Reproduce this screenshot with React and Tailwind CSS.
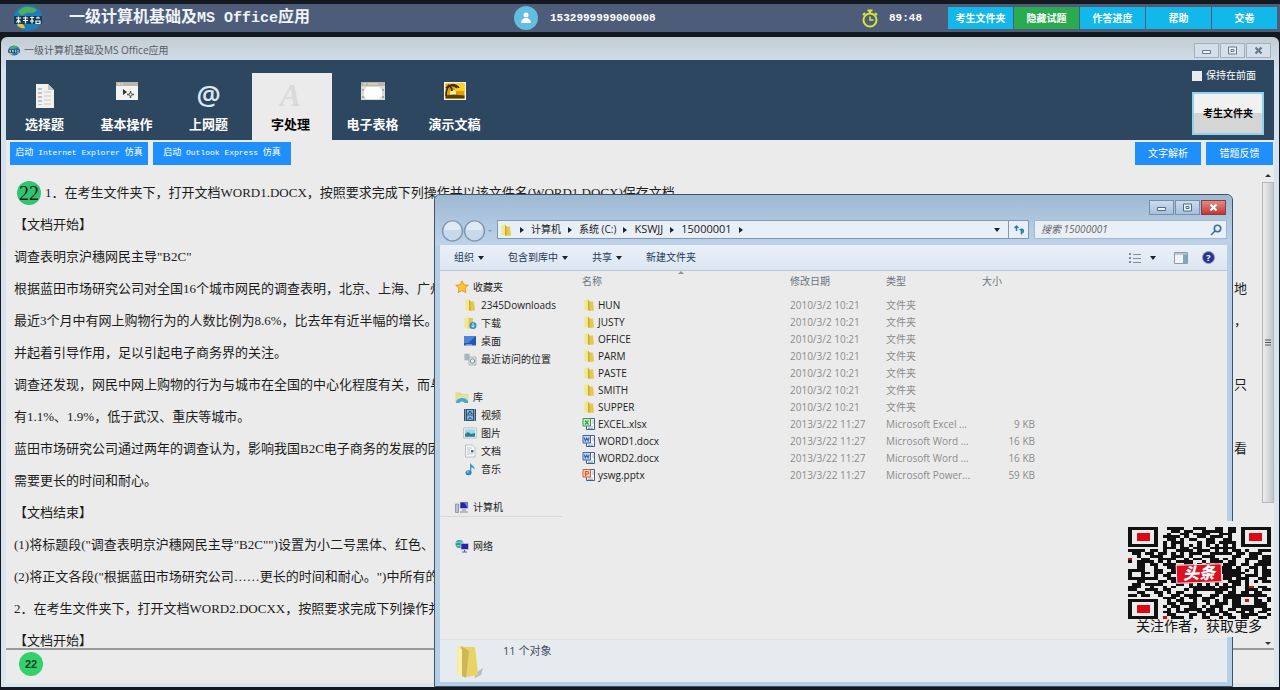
import React, { useState } from "react";

const navTabs = [
  { key: "choice", label: "选择题" },
  { key: "basic", label: "基本操作" },
  { key: "net", label: "上网题" },
  { key: "word", label: "字处理" },
  { key: "excel", label: "电子表格" },
  { key: "ppt", label: "演示文稿" },
];

const examActions = ["考生文件夹", "隐藏试题", "作答进度", "帮助", "交卷"];

// [start of the line, end of the line]
const questionLines = [
  ["【文档开始】"],
  ['调查表明京沪穗网民主导"B2C"'],
  ["根据蓝田市场研究公司对全国16个城市网民的调查表明，北京、上海、广州", "地"],
  ["最近3个月中有网上购物行为的人数比例为8.6%，比去年有近半幅的增长。人", "，"],
  ["并起着引导作用，足以引起电子商务界的关注。"],
  ["调查还发现，网民中网上购物的行为与城市在全国的中心化程度有关，而与", "只"],
  ["有1.1%、1.9%，低于武汉、重庆等城市。"],
  ["蓝田市场研究公司通过两年的调查认为，影响我国B2C电子商务的发展的因", "看"],
  ["需要更长的时间和耐心。"],
  ["【文档结束】"],
  ['(1)将标题段("调查表明京沪穗网民主导"B2C"")设置为小二号黑体、红色、居'],
  ['(2)将正文各段("根据蓝田市场研究公司……更长的时间和耐心。")中所有的"'],
  ["2．在考生文件夹下，打开文档WORD2.DOCXX，按照要求完成下列操作并"],
  ["【文档开始】"],
];

const sideGroups = [
  [
    { icon: "star", label: "收藏夹", root: true },
    { icon: "folder", label: "2345Downloads" },
    { icon: "download", label: "下载" },
    { icon: "desktop", label: "桌面" },
    { icon: "recent", label: "最近访问的位置" },
  ],
  [
    { icon: "library", label: "库", root: true },
    { icon: "video", label: "视频" },
    { icon: "image", label: "图片" },
    { icon: "doc", label: "文档" },
    { icon: "music", label: "音乐" },
  ],
  [{ icon: "computer", label: "计算机", root: true }],
  [{ icon: "network", label: "网络", root: true }],
];

const folder = (name) => ({ name, icon: "folder", date: "2010/3/2 10:21", type: "文件夹", size: "" });

const files = [
  folder("HUN"),
  folder("JUSTY"),
  folder("OFFICE"),
  folder("PARM"),
  folder("PASTE"),
  folder("SMITH"),
  folder("SUPPER"),
  { name: "EXCEL.xlsx", icon: "xls", date: "2013/3/22 11:27", type: "Microsoft Excel ...", size: "9 KB" },
  { name: "WORD1.docx", icon: "word", date: "2013/3/22 11:27", type: "Microsoft Word ...", size: "16 KB" },
  { name: "WORD2.docx", icon: "word", date: "2013/3/22 11:27", type: "Microsoft Word ...", size: "16 KB" },
  { name: "yswg.pptx", icon: "ppt", date: "2013/3/22 11:27", type: "Microsoft Power...", size: "59 KB" },
];

const qrRows = [
  "#######..####..###..##.##.#######",
  "#.....#...##.##..#####.##.#.....#",
  "#.###.#..#..##.####..###..#.###.#",
  "#.###.#.####.#..##.###.#..#.###.#",
  "#.###.#..##.#.##..##..##..#.###.#",
  "#.....#.#.###...#.##.####.#.....#",
  "#######.#.#.#.#.#.#.#.#.#.#######",
  "........###.##.##..######........",
  "####.##.#..####.###.#.#.##.#..###",
  ".##.##.##.#.#.###..#####.##.###..",
  "..#..###..###.#..###....##..##.##",
  "...##..####..#.##..##.#.#..###.##",
  "#.####.#.#.####..#.###.##..#..###",
  "..##.##.###..##.#.#.#.###.##.####",
  "..##..#..###.#.......###.#..##.#.",
  "####..##..##.........#####.#.#.##",
  "#..##.##.##..........######..#.##",
  "#..#..#.##.#..........####.###.##",
  "#######..##.........#.##.###..##.",
  "..##...##.###.......#..###.#.#.##",
  ".##.####...##.#.#.#.#.#.##.#.....",
  "###..#..#.#...######.####..#..##.",
  "##..###.##...#.########.#..###.##",
  "..##..##.#.##..#....##.##.##.##..",
  "##.##..#..##.####..##.#######.##.",
  "........###.#.##.###..###...##..#",
  "#######..#.##..#.##.#.#.#.#.###.#",
  "#.....#..##.####..#.###.#...####.",
  "#.###.#.#.##..##.#.###..#####.##.",
  "#.###.#..#.#.####.##.#.##.###..##",
  "#.###.#.##.###..####.##..##.#.##.",
  "#.....#..##...##.#.##.##..####..#",
  "#######...###.#..##..#.##.##..##.",
];

function TabIcon({ name, active }) {
  if (name === "choice") {
    return (
      <svg viewBox="0 0 20 26" className="h-[26px] w-5">
        <path d="M1 1h12l6 6v18H1z" fill="#f1f1ee" />
        <path d="M13 1v6h6z" fill="#bfc6ca" />
        <path d="M4 5v17M6 5v17" stroke="#8c9499" strokeDasharray="2 2" />
        <path d="M9 9h7M9 13h7M9 17h7M9 21h7" stroke="#c9c9c4" />
      </svg>
    );
  }
  if (name === "basic") {
    return (
      <svg viewBox="0 0 24 20" className="h-5 w-6">
        <path d="M1 1h22v18H1z" fill="#f3f3f1" />
        <path d="M1 1h22v4H1z" fill="#b9b8ac" />
        <path d="M3 3h6" stroke="#f6ecc0" strokeDasharray="2 1" />
        <path d="M8 8v6l4-3z" fill="#333" />
        <path d="M15.500 10v7M12 13.500h7" stroke="#555" strokeWidth="1.500" />
        <circle cx="15.500" cy="13.500" r="1.500" fill="#fff" stroke="#555" />
      </svg>
    );
  }
  if (name === "net") {
    return <span className="font-['Open_Sans',sans-serif] text-[27px] leading-6 font-semibold text-[#dbe9f3]">@</span>;
  }
  if (name === "word") {
    return (
      <span className={`font-['Liberation_Serif',serif] text-[32px] leading-7 font-bold italic ${active ? "text-[#d9dbdb]" : "text-[#dbe9f3]"}`}>A</span>
    );
  }
  if (name === "excel") {
    return (
      <svg viewBox="0 0 26 20" className="h-5 w-[26px]">
        <path d="M1 1h24v18H1z" fill="#dcdcd6" />
        <path d="M1 1h24v4H1z" fill="#b5b6b0" />
        <path d="M3 3h3M8 3h10" stroke="#f3e7a8" />
        <path d="M7 6h12l3 3v6l-3 3H7l-3-3V9z" fill="#fff" />
        <path d="M3 8v2M3 15v2M23 8v2M23 15v2" stroke="#777" />
      </svg>
    );
  }
  return (
    <svg viewBox="0 0 24 20" className="h-5 w-6">
      <path d="M1 1h22v18H1z" fill="#f8f4e4" />
      <path d="M2.500 2.500h19v15h-19z" fill="#e0a000" />
      <path d="M12 3h9.500v7H12z" fill="#ffd21e" />
      <circle cx="10" cy="12" r="3" fill="#fff3a8" />
      <path d="M2.500 17.500v-3l8-1 11 1v3z" fill="#5a3d05" />
      <path d="M3 15C3 8 5 5 8 4M3 7c3-3 8-4 11 0M8 4c4-1 7 1 8 3M5 4c2 1 4 3 4 6" fill="none" stroke="#3c2a04" strokeWidth="1.600" />
    </svg>
  );
}

function FileIcon({ name, className = "h-[14px] w-[14px]" }) {
  const office = { xls: ["#3f9a45", "X"], word: ["#3a63b0", "W"], ppt: ["#e0572c", "P"] };
  if (office[name]) {
    const [color, kind] = office[name];
    return (
      <svg viewBox="0 0 14 14" className={className}>
        <path d="M4.500 1.500h8v11h-8z" fill="#fff" stroke="#3c5f94" />
        <path d="M6 10h5M6 11.500h5M10 4h2M10 6h2" stroke="#8aa0c0" strokeWidth=".8" />
        <rect x=".5" y="1" width="8.500" height="8.500" rx="1" fill={color} />
        <rect x="1.500" y="2" width="6.500" height="6.500" fill="#fff" opacity=".75" />
        {kind === "X" && <path d="M3 3.500l3.500 4M6.500 3.500l-3.500 4" stroke={color} strokeWidth="1.200" />}
        {kind === "W" && <path d="M2.300 3.500l1 3.500 1.400-3 1.400 3 1-3.500" fill="none" stroke={color} strokeWidth="1.100" />}
        {kind === "P" && <path d="M3.500 8V3.500h1.800a1.300 1.300 0 010 2.700H3.500" fill="none" stroke={color} strokeWidth="1.200" />}
      </svg>
    );
  }
  return (
    <svg viewBox="0 0 14 14" className={className}>
      {name === "folder" && (
        <>
          <path d="M2.500 2l4-1v11.500l-4-.5z" fill="#f4e68a" />
          <path d="M6.500 3.500h4.500l1 9-5.500.5z" fill="#e3c94f" />
          <path d="M6 1.500l1.500 2V13L6 12z" fill="#c9a93a" />
        </>
      )}
      {name === "download" && (
        <>
          <path d="M1.500 2l4-1v12l-4-1z" fill="#f4e68a" />
          <path d="M5.500 2h4.500v10.500H5.500z" fill="#ddc65a" />
          <circle cx="10" cy="9.500" r="3.500" fill="#2f8fc4" />
          <path d="M10 7v4M8.300 9.500L10 11.300l1.700-1.800" fill="none" stroke="#d9f3ff" />
        </>
      )}
      {name === "desktop" && (
        <>
          <path d="M1 2h12v9.500H1z" fill="#2458b5" />
          <path d="M1 2h12L5 9H1z" fill="#4f83d6" />
          <path d="M3 11h6" stroke="#bcd3f2" />
        </>
      )}
      {name === "recent" && (
        <>
          <path d="M1 1.500h6v7H1z" fill="#c3cdd1" />
          <path d="M2 3h4M2 5h4M2 7h4" stroke="#889398" strokeWidth=".8" />
          <path d="M6 5h7v8H6z" fill="#d7dedf" stroke="#8f9ea3" strokeWidth=".6" />
          <circle cx="9.500" cy="9" r="2.200" fill="#eef5f5" stroke="#7c9494" />
        </>
      )}
      {name === "star" && (
        <path d="M7 .8l1.900 4 4.300.5-3.200 3 .9 4.400L7 10.500l-3.900 2.200.9-4.400-3.200-3 4.300-.5z" fill="#ffc62e" stroke="#e08a17" strokeWidth=".8" />
      )}
      {name === "library" && (
        <>
          <path d="M.5 2.500h5l1 1.500h7v8H.5z" fill="#eed978" />
          <path d="M2 5h11v6H2z" fill="#cfe6b8" />
          <path d="M1 12c1-5 10-5 12-1v2H9.500c-1-2-4-2-5 0H1z" fill="#4fa6cd" />
        </>
      )}
      {name === "video" && (
        <>
          <path d="M1 1h12v12H1z" fill="#33506e" />
          <path d="M4 2h6v4.500H4zM4 7.500h6V12H4z" fill="#7fb4dd" />
          <path d="M2.500 1.500v11M11.500 1.500v11" stroke="#d5dde4" strokeDasharray="1 1" />
          <path d="M5 6l2-3 2 3M5 11.500l2-2 2 2" fill="none" stroke="#17395c" />
        </>
      )}
      {name === "image" && (
        <>
          <path d="M.7 2h12.600v10H.7z" fill="#f8fafb" stroke="#9ba9b0" strokeWidth=".7" />
          <path d="M2 3.300h10v7.400H2z" fill="#9fd8ea" />
          <path d="M2 8l3-2 3 2 4-1v3.700H2z" fill="#2b7f93" />
        </>
      )}
      {name === "doc" && (
        <>
          <path d="M2.500 1h7L12 3.500V13H2.500z" fill="#fafbfc" stroke="#a2abb5" strokeWidth=".7" />
          <path d="M4 4h5M4 6h3M4 8h3M4 10h6" stroke="#a9b3c2" strokeWidth=".8" />
          <path d="M8 6h2.500v2.500H8z" fill="#4d6ba8" />
        </>
      )}
      {name === "music" && (
        <>
          <path d="M7 .5c1 3 5 3 4.500 7.500C11 6 9 5.500 8.300 5.500V11H7z" fill="#3b9ad2" />
          <ellipse cx="5.500" cy="10.800" rx="3" ry="2.500" fill="#2b86c5" />
          <ellipse cx="4.800" cy="10" rx="1.200" ry=".8" fill="#9fdcf5" />
        </>
      )}
      {name === "computer" && (
        <>
          <path d="M4.500 1.500h9v7.500h-9z" fill="#d7dcec" />
          <path d="M5.300 2.300h7.400v5.900H5.300z" fill="#2521a0" />
          <path d="M9 2.300h3.700v5.900z" fill="#6a7ee0" />
          <path d="M.5 4h3v8.500h-3z" fill="#b9c0d1" stroke="#6d7690" strokeWidth=".6" />
          <path d="M7 10h4M5 12h8" stroke="#7e8799" />
        </>
      )}
      {name === "network" && (
        <>
          <circle cx="4.500" cy="5" r="4" fill="#2d9a93" />
          <path d="M1 4c3-2 5 0 7-1M1.500 7c2-1 4 0 5 1" fill="none" stroke="#a8e4d8" />
          <path d="M6 4.500h7.500v6H6z" fill="#2822a6" stroke="#c4c9e6" strokeWidth=".7" />
          <path d="M9.500 11v2M7 13h5" stroke="#5b6488" />
        </>
      )}
    </svg>
  );
}

function Logo({ className }) {
  return (
    <span className={`relative flex items-center justify-center ${className}`}>
      <svg viewBox="0 0 30 26" className="h-full w-full">
        <ellipse cx="15" cy="13" rx="14.500" ry="12.800" fill="#1d7db8" />
        <path d="M5 7c4-6 12-7 19-2-3 5-8 1-12 4-3 2-5 1-7-2z" fill="#4fae5b" />
        <path d="M4 20c3-4 7-1 8 3-3 1-6-1-8-3z" fill="#e8c52e" />
        <path d="M1 11h28v8H1z" fill="#173b57" />
        <path d="M3 13h5M5.500 11.500v7M3.500 17.500l2-3 2 3M10 13h5M10 15.500h5M12.500 11.500v7M17 12.500h4M19 11.500v7M17 16h4M23 13h4M25 11.500v2M23 16h4v2.500h-4z" fill="none" stroke="#fff" strokeWidth="1.200" />
      </svg>
    </span>
  );
}

function WindowButtons({ explorer }) {
  const base = "flex h-[15px] w-[25px] items-center justify-center border";
  const plain = explorer
    ? "border-[#7590ad] bg-linear-to-b from-[#cbdcec] to-[#a6c0da] text-[#506a86]"
    : "border-[#a2afbd] bg-[#d3dfeb] text-[#66788b]";
  const close = explorer ? "border-[#8c3c44] bg-linear-to-b from-[#dc8b88] to-[#c23535] text-white" : plain;
  return (
    <div className="flex gap-px">
      <button aria-label="最小化" className={`${base} ${plain}`}>
        <svg viewBox="0 0 11 9" className="h-[9px] w-[11px]"><path d="M1.500 4.500h8v3h-8z" fill="#eef3f8" stroke="currentColor" /></svg>
      </button>
      <button aria-label="最大化" className={`${base} ${plain}`}>
        <svg viewBox="0 0 11 9" className="h-[9px] w-[11px]"><path d="M1.500 1h8v7h-8zM4 3.500h3v2H4z" fill="#eef3f8" stroke="currentColor" /></svg>
      </button>
      <button aria-label="关闭" className={`${base} ${close}`}>
        <svg viewBox="0 0 11 9" className="h-[9px] w-[11px]"><path d="M2.500 1.500l6 6M8.500 1.500l-6 6" stroke="currentColor" strokeWidth="2.200" /></svg>
      </button>
    </div>
  );
}

function ExamBar() {
  return (
    <header className="flex h-[37px] shrink-0 flex-col border-t-4 border-b-[5px] border-[#14181f] bg-[#4d5c78]">
      <div className="flex h-7 items-center pl-3">
        <Logo className="h-[26px] w-8" />
        <h1 className="w-[470px] pl-[25px] font-['Liberation_Mono','Noto_Sans_CJK_SC',monospace] text-[16px] leading-6 font-bold text-[#f0f3f8]">
          一级计算机基础及<span className="text-[15px]">MS Office</span>应用
        </h1>
        <svg viewBox="0 0 24 24" className="h-6 w-6">
          <circle cx="12" cy="12" r="12" fill="#62bde0" />
          <circle cx="12" cy="9" r="2.500" fill="#fff" />
          <path d="M7 17c.3-3.500 2.500-5 5-5s4.700 1.500 5 5z" fill="#fff" />
        </svg>
        <span className="pl-3 font-['Liberation_Mono',monospace] text-[11px] font-bold text-white">1532999999000008</span>
        <div className="ml-auto flex items-center">
          <svg viewBox="0 0 18 19" className="h-[19px] w-[18px]" fill="none" stroke="#d6e63c">
            <circle cx="9" cy="11" r="6.500" strokeWidth="2" />
            <path d="M6.500 1.500h5M9 1.500v3M14 4l2 2M4 4L2 6" strokeWidth="2" />
            <path d="M9 7.500V11h3.500" strokeWidth="1.500" />
          </svg>
          <span className="w-[69px] pl-[10px] font-['Liberation_Mono',monospace] text-[11px] font-bold text-white">89:48</span>
          <div className="flex gap-px pr-[3px]">
            {examActions.map((label, i) => (
              <button
                key={label}
                className={`h-[22px] w-[65px] text-[10px] font-bold text-white ${i === 1 ? "bg-[#2bab50]" : "bg-[#13b8ea]"}`}
              >
                {label}
              </button>
            ))}
          </div>
        </div>
      </div>
    </header>
  );
}

function Explorer() {
  return (
    <section className="absolute top-[194px] right-[47px] bottom-[3px] left-[434px] flex flex-col rounded-t-md border border-[#3d5468] bg-[#b5cfe6] px-[5px] pb-1 font-['Open_Sans','Noto_Sans_CJK_SC',sans-serif] text-[10px] text-[#222]">
      <div className="-mx-[5px] flex flex-col rounded-t-md bg-linear-to-b from-[#9fb9d3] to-[#bcd3ea] px-[5px]">
        <div className="flex h-[25px] items-center justify-end pr-px">
          <WindowButtons explorer />
        </div>
        <div className="flex h-[25px] items-start">
          <div className="flex w-[57px] items-center">
            <svg viewBox="0 0 54 22" className="h-[22px] w-[54px]">
              <circle cx="12.500" cy="11" r="10" fill="#c7d9ea" stroke="#8199b2" strokeWidth="1.500" />
              <circle cx="34.500" cy="11" r="10" fill="#c7d9ea" stroke="#8199b2" strokeWidth="1.500" />
              <path d="M4 10a8.500 8.500 0 0117 0zM26 10a8.500 8.500 0 0117 0z" fill="#dfeaf4" />
              <path d="M48 10h4l-2 2z" fill="#7c98b3" />
            </svg>
          </div>
          <div className="flex h-[19px] flex-1 items-center border border-[#8098b0] bg-[#e9eff6] pl-px">
            <FileIcon name="folder" className="h-[14px] w-[14px]" />
            {["计算机", "系统 (C:)", "KSWJJ", "15000001"].map((part) => (
              <span key={part} className="flex items-center">
                <Caret right />
                <span className={/^[A-Z0-9]+$/.test(part) ? "text-[11px]" : ""}>{part}</span>
              </span>
            ))}
            <Caret right />
            <span className="ml-auto pr-1"><Caret /></span>
            <button aria-label="刷新" className="flex h-full w-5 items-center justify-center border-l border-[#8098b0]">
              <svg viewBox="0 0 12 12" className="h-3 w-3" fill="none" stroke="#2c7fa8" strokeWidth="1.500">
                <path d="M3.500 7V2M1.500 4l2-2 2 2M8.500 5v5.500M6.500 6c3-2 5 0 3 3" />
              </svg>
            </button>
          </div>
          <div className="ml-[5px] flex h-[19px] w-[193px] items-center border border-[#a5b9cd] bg-[#e9eff6] px-1">
            <input aria-label="搜索" placeholder="搜索 15000001" className="min-w-0 flex-1 bg-transparent pl-[2px] italic outline-none placeholder:text-[#666]" />
            <svg viewBox="0 0 12 12" className="h-3 w-3" fill="none" stroke="#3f6da0" strokeWidth="1.600">
              <circle cx="7.500" cy="4.500" r="3.200" />
              <path d="M5 7l-4 4" />
            </svg>
          </div>
        </div>
      </div>
      <div className="flex h-[26px] shrink-0 items-center border-b border-[#b9c8da] bg-linear-to-b from-[#eaf0f8] to-[#dce6f2] pl-[14px] text-[#1e395b]">
        <button className="flex items-center">组织<Caret /></button>
        <button className="ml-5 flex items-center">包含到库中<Caret /></button>
        <button className="ml-5 flex items-center">共享<Caret /></button>
        <button className="ml-5">新建文件夹</button>
        <div className="ml-auto flex items-center pr-3">
          <button aria-label="更改视图" className="flex items-center gap-1">
            <svg viewBox="0 0 14 12" className="h-3 w-[14px]" stroke="#7d8b9b">
              <path d="M1 2h2M1 6h2M1 10h2" strokeWidth="2" />
              <path d="M5 2.500h8M5 6.500h8M5 10.500h8" />
            </svg>
            <Caret />
          </button>
          <button aria-label="预览窗格" className="ml-[14px]">
            <svg viewBox="0 0 14 12" className="h-3 w-[14px]">
              <path d="M.5.500h13v11H.5z" fill="#f0f4f8" stroke="#8a9bad" />
              <path d="M.5 2h13" stroke="#8a9bad" />
              <path d="M9 2.500h4v9H9z" fill="#7ba9b9" />
            </svg>
          </button>
          <button aria-label="获取帮助" className="ml-[14px] flex h-[13px] w-[13px] items-center justify-center rounded-full border border-[#8e98c8] bg-[#2a358f] text-[9px] leading-none font-bold text-white">
            ?
          </button>
        </div>
      </div>
      <div className="flex min-h-0 flex-1 bg-[#ebebeb]">
        <nav className="flex w-[142px] shrink-0 flex-col gap-5 pt-[7px]">
          {sideGroups.map((group, i) => (
            <ul key={i} className={i === 2 ? "mr-5 border-b border-[#d6d9dc]" : ""}>
              {group.map((item) => (
                <li key={item.label} className={item.root ? "pl-[15px]" : "pl-[23px]"}>
                  <a href="#" className="flex h-[18px] items-center gap-1 whitespace-nowrap">
                    <FileIcon name={item.icon} />
                    {item.label}
                  </a>
                </li>
              ))}
            </ul>
          ))}
        </nav>
        <div className="min-w-0 flex-1">
          <svg viewBox="0 0 6 3" className="ml-24 h-[3px] w-[6px]"><path d="M0 3h6L3 0z" fill="#8a96a3" /></svg>
          <table className="table-fixed border-collapse text-left text-[#8b8b8b]">
            <thead>
              <tr className="h-[22px] align-top text-[#6a7480]">
                <th className="w-[208px] p-0 font-normal">名称</th>
                <th className="w-24 p-0 font-normal">修改日期</th>
                <th className="w-24 p-0 font-normal">类型</th>
                <th className="w-[53px] p-0 font-normal">大小</th>
              </tr>
            </thead>
            <tbody>
              {files.map((f) => (
                <tr key={f.name} className="h-[17px] leading-4">
                  <td className="p-0 text-[#222]">
                    <span className="flex items-center gap-[2px]">
                      <FileIcon name={f.icon} />
                      {f.name}
                    </span>
                  </td>
                  <td className="p-0">{f.date}</td>
                  <td className="p-0 whitespace-nowrap">{f.type}</td>
                  <td className="p-0 text-right">{f.size}</td>
                </tr>
              ))}
            </tbody>
          </table>
        </div>
      </div>
      <footer className="flex h-[43px] shrink-0 gap-[13px] border-t border-[#dde2e8] bg-[#e6ebf0] pt-1 pl-2">
        <svg viewBox="0 0 42 36" className="h-9 w-[42px]">
          <path d="M26 30l9-6-2 7-6 3z" fill="#b9bec4" />
          <path d="M9 3l8-1v29l-8-1z" fill="#f3e48c" />
          <path d="M16 3h11l3 28-12 2z" fill="#e9d365" />
          <path d="M13 2l8 5-3 27-4-2z" fill="#cdb55a" />
          <path d="M9 3l5 2v28l-4-2z" fill="#f8efa9" />
        </svg>
        <span className="text-[11px] leading-[14px] text-[#3f4d5c]">11 个对象</span>
      </footer>
    </section>
  );
}

function Caret({ right }) {
  return (
    <svg viewBox="0 0 6 6" className={right ? "mx-[6px] h-[6px] w-[6px]" : "mx-1 h-[6px] w-[6px]"}>
      <path d={right ? "M1 0l4 3-4 3z" : "M0 1h6L3 5z"} fill="#1a2430" />
    </svg>
  );
}

function QrCard() {
  return (
    <aside className="absolute right-[7px] bottom-[53px] flex w-[148px] flex-col items-center bg-[#ebebeb] pt-[6px] pb-[2px]">
      <div className="relative">
        <svg viewBox="0 0 33 33" preserveAspectRatio="none" className="h-[92px] w-[143px]" shapeRendering="crispEdges">
          {qrRows.map((row, y) =>
            [...row].map((c, x) => c === "#" && <rect key={`${x}-${y}`} x={x} y={y} width="1" height="1" fill="#111" />)
          )}
          <path d="M25 24h5v5h-5zM29 23h1v3h-1z" fill="#111" />
          <path d="M26 25h3v3h-3z" fill="#ebebeb" />
          <path d="M2 2h3v3H2zM28 2h3v3h-3zM2 28h3v3H2zM27 26h1v1h-1zM0 11h1v1H0zM28 21h1v1h-1zM8 32h1v1H8z" fill="#dc0812" />
        </svg>
        <span className="absolute inset-0 m-auto flex h-[19px] w-[46px] -rotate-2 items-center justify-center border border-[#ebebeb] bg-[#dc1020] text-[16px] leading-none font-black text-white italic">
          头条
        </span>
      </div>
      <p className="font-['Liberation_Serif','Noto_Sans_CJK_SC',serif] text-[14px] leading-4 whitespace-nowrap text-[#111]">关注作者，获取更多</p>
    </aside>
  );
}

export default function App() {
  const [active, setActive] = useState("word");
  const [onTop, setOnTop] = useState(false);

  return (
    <div className="relative flex h-screen flex-col overflow-hidden bg-[#14181f] pb-[3px] font-['Liberation_Sans','Noto_Sans_CJK_SC',sans-serif]">
      <ExamBar />

      <main className="mx-px flex min-h-0 flex-1 flex-col rounded-t-md bg-linear-to-b from-[#c3ccd3] via-[#d5e2ef] via-5% to-[#d9e5ef] px-[5px] pb-1">
        <div className="flex h-[23px] shrink-0 items-center justify-between pt-1 pr-[3px] pl-[2px]">
          <div className="flex items-center gap-1 font-['Open_Sans','Noto_Sans_CJK_SC',sans-serif] text-[10px] text-[#555c64]">
            <Logo className="h-[11px] w-3" />
            一级计算机基础及MS Office应用
          </div>
          <WindowButtons />
        </div>

        {/* Subject tabs */}
        <div className="flex h-20 shrink-0 items-end justify-between bg-[#2d4760]">
          <div className="flex gap-[2px]">
            {navTabs.map((tab) => (
              <button
                key={tab.key}
                onClick={() => setActive(tab.key)}
                className={`flex h-[67px] w-20 flex-col items-center pr-[3px] text-[13px] font-bold ${
                  active === tab.key ? "bg-[#ebebeb] text-black" : "text-white"
                }`}
              >
                <span className={`flex h-[42px] justify-center ${tab.key === "net" || tab.key === "choice" ? "pt-[10px]" : "pt-2"}`}>
                  <TabIcon name={tab.key} active={active === tab.key} />
                </span>
                <span className="leading-5">{tab.label}</span>
              </button>
            ))}
          </div>
          <div className="flex h-full flex-col items-end pt-[10px] pr-[10px]">
            <label className="flex items-center gap-1 pr-2 text-[10px] leading-3 text-white">
              <input
                type="checkbox"
                checked={onTop}
                onChange={(e) => setOnTop(e.target.checked)}
                className="h-[10px] w-[10px] appearance-none bg-[#e9ecee] checked:bg-[#1f8fff]"
              />
              保持在前面
            </label>
            <button className="mt-[10px] h-[43px] w-[72px] border-2 border-[#8fd3ea] bg-linear-to-b from-[#f1f1f1] from-50% to-[#d5d5d5] to-50% text-[10px] font-bold text-black">
              考生文件夹
            </button>
          </div>
        </div>

        <div className="flex min-h-0 flex-1 flex-col bg-[#ebebeb]">
          <div className="flex h-[25px] shrink-0 gap-[5px] pt-[2px] pr-px pl-1 text-white">
            {["Internet Explorer", "Outlook Express"].map((app) => (
              <button key={app} className="h-[23px] w-[138px] bg-[#1f90fb] font-['Liberation_Mono','Noto_Sans_CJK_SC',monospace] text-[9px] whitespace-nowrap">
                启动<span className="text-[8px]"> {app} </span>仿真
              </button>
            ))}
            <button className="ml-auto h-[23px] w-[66px] bg-[#1f90fb] text-[10px]">文字解析</button>
            <button className="h-[23px] w-[67px] bg-[#1f90fb] text-[10px]">错题反馈</button>
          </div>

          {/* Question text */}
          <div className="flex min-h-0 flex-1 border-b-2 border-[#9a9a9a]">
            <article className="min-w-0 flex-1 overflow-hidden pt-3 pl-2 font-['Liberation_Serif','Noto_Sans_CJK_SC',serif] text-[13px] leading-8 text-[#1c1c1c]">
              <p className="flex h-8 items-center whitespace-nowrap">
                <span className="mr-1 ml-[3px] flex h-6 w-6 items-center justify-center rounded-full bg-[#33c472] text-[20px]">22</span>
                1．在考生文件夹下，打开文档WORD1.DOCX，按照要求完成下列操作并以该文件名(WORD1.DOCX)保存文档。
              </p>
              {questionLines.map(([start, end], i) => (
                <p key={i} className="flex h-8 justify-between whitespace-nowrap">
                  <span>{start}</span>
                  {end && <span>{end}</span>}
                </p>
              ))}
            </article>
            <div className="flex w-[27px] flex-col items-end pt-2 pb-[2px]">
              <svg viewBox="0 0 12 5" className="h-[5px] w-3"><path d="M3 4h6L6 1z" fill="#333" /></svg>
              <div className="mt-1 flex h-[321px] w-3 items-center justify-center border border-[#b5b8bb] bg-linear-to-r from-[#ededed] to-[#c4c7ca]">
                <svg viewBox="0 0 6 7" className="h-[7px] w-[6px]"><path d="M0 1h6M0 3.500h6M0 6h6" stroke="#555" /></svg>
              </div>
              <svg viewBox="0 0 12 5" className="mt-auto h-[5px] w-3"><path d="M3 1h6L6 4z" fill="#333" /></svg>
            </div>
          </div>

          <footer className="flex h-[33px] shrink-0 items-start pt-[2px] pl-[13px]">
            <button className="flex h-6 w-6 items-center justify-center rounded-full bg-[#33d16c] text-[11px] font-bold text-[#153d22]">22</button>
          </footer>
        </div>
      </main>

      <Explorer />
      <QrCard />
    </div>
  );
}
